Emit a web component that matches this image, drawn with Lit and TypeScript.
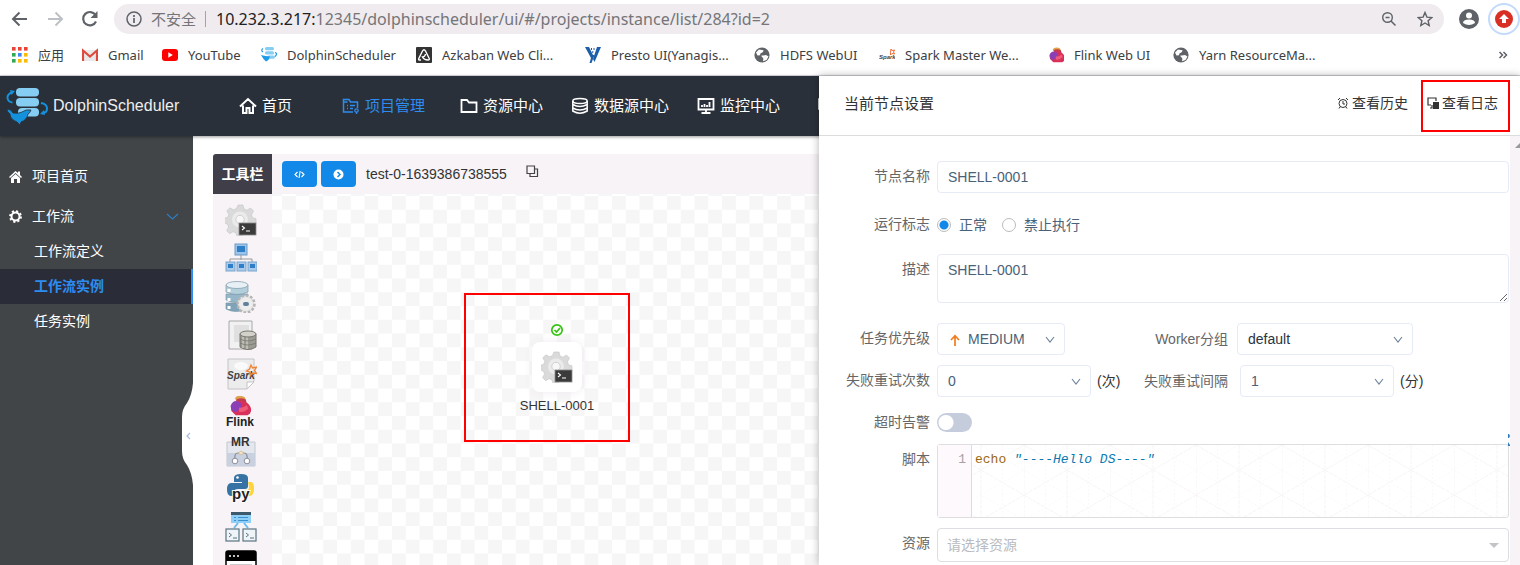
import { LitElement, html, svg, css } from "lit";
import { customElement, state } from "lit/decorators.js";
import { classMap } from "lit/directives/class-map.js";

const globe = svg`<circle cx="8" cy="8" r="7.6" fill="#5f6368"/><path d="M2 5.500 5 2.400 9.500 3.200 9 5 6.400 6.600 6 8.200 3.500 8.600zM7 8.800l5-.8 2.500 1.500L12.500 13 9 14.200 9.400 11.600z" fill="#fff"/>`;

const elephant = svg`<path d="M8 5q3-4.500 9-2.500q5 1 3 6l-7 3z" fill="#e0a24a"/><path d="M9 7q5-4 12-.5l1 5-7 2z" fill="#c33b4f"/><path d="M4 20q-2-9 6-11q10-3 15 4q4 5 1 10l-3 2H9z" fill="#d9305a"/><path d="M3 14q3-8 10-5q5 3 3 7l-6 5q-6 1-7-7z" fill="#8c3fb5"/><path d="M13 16q5 1 9-3l2 4q-5 5-11 4z" fill="#ef5a78"/>`;

const gear = svg`<g fill="#dadada" stroke="#c4c4c4" stroke-width=".6"><path d="M13 1h5l1 4 3 1.200 3.500-2.200 3 3-2 3.800 1 3 3.500 1v4.500l-4 1-1.200 3 2 3.600-3.200 3-3.600-2-3 1.200-1 3.500h-5l-1-3.700-3-1.200-3.400 2-3-3.200 2-3.500-1.200-3-3.400-1v-4.600l3.600-1 1.200-3-2-3.600 3.200-3 3.500 2 3-1.200z"/></g><circle cx="15" cy="15.500" r="8" fill="#ebebeb"/><circle cx="15" cy="15.500" r="4.200" fill="#f8f6f8" stroke="#c6c6c6" stroke-width=".8"/><rect x="14" y="19" width="17" height="12" fill="#3b3b3b" stroke="#8c8c8c" stroke-width=".8"/><path d="m17 22 2.500 2-2.500 2M21 27h4" fill="none" stroke="#fff" stroke-width="1.100"/>`;

const toolIcons = [
  gear,
  svg`<rect x="10" y="1" width="12" height="11" fill="#9cc4ea" stroke="#6f9bc4"/><rect x="12" y="3" width="8" height="6" fill="#2f7fc8"/><path d="M16 12v5M5 19v-3h22v3" fill="none" stroke="#999"/>${[1, 12, 23].map((x) => svg`<rect x=${x} y="19" width="9" height="9" fill="#a8cbed" stroke="#7aa3c9"/><rect x=${x + 2} y="21" width="5" height="4" fill="#2f7fc8"/>`)}`,
  svg`<g stroke="#7d98a8" stroke-width=".7"><path d="M1 22v6q10 5 21 0v-6z" fill="#7fa3b8"/><path d="M1 13v6q10 5 22 0v-6z" fill="#95b7c9"/><path d="M1 4v7q11 5 22 0V4z" fill="#b4cfdc"/><ellipse cx="12" cy="4" rx="11" ry="3.500" fill="#e6f0f5"/></g><path d="M4 8v3M4 17v3M4 25v3" stroke="#fff" stroke-width="3"/><circle cx="21" cy="23" r="8.500" fill="#e4e4e4" stroke="#b5b5b5" stroke-width="2.500" stroke-dasharray="2.600 1.800"/><circle cx="21" cy="23" r="6.500" fill="#ededed"/><rect x="18" y="21" width="6" height="4" rx="2" fill="#5f7f9b"/>`,
  svg`<path d="M4 2h23v28H4z" fill="#f1f1f1" stroke="#a8a8a8"/><path d="M9 6h15v17H9z" fill="#e0e0e0"/><path d="M15 15v13q8 5 16 0V15z" fill="#9b9b93" stroke="#77776f"/><path d="M18 17v12M22 18v12" stroke="#c9c9c0" stroke-width="1.500"/><ellipse cx="23" cy="15" rx="8" ry="3" fill="#d2d2ca" stroke="#77776f"/><path d="M15 20q8 4 16 0M15 24q8 4 16 0" fill="none" stroke="#77776f" stroke-width=".8"/>`,
  svg`<path d="M3 1h26v22l-7 8H3z" fill="#ececec" stroke="#c4c4c4"/><path d="M22 31v-7h7z" fill="#fff" stroke="#c4c4c4"/><ellipse cx="16" cy="8" rx="7" ry="4" fill="#fafafa"/><text x="2" y="21" class="glyph-spark">Spark</text><path d="m26 7 1.500 3 4-1-2 3.500 2 3-4-.5-2 2.500-1-3.500-3-1 3-2z" fill="none" stroke="#f08232" stroke-width="1.300"/>`,
  svg`<g transform="translate(3 -2) scale(.85)">${elephant}</g><text x="1" y="30" class="glyph-flink">Flink</text>`,
  svg`<path d="M2 7h28v24H2z" fill="#e4e8ee" stroke="#c2c8d1"/><path d="M2 18h28v13H2z" fill="#c9d1e0"/><path d="M10 25q-1-7 3-7h6q4 0 3 7" fill="none" stroke="#8a8f99" stroke-width="1.200"/><circle cx="10" cy="26" r="2.800" fill="#fff" stroke="#8a8f99"/><circle cx="22" cy="26" r="2.800" fill="#fff" stroke="#8a8f99"/><path d="m16 16 3 2-3 2-3-2z" fill="#f3e2c4" stroke="#c7ad80" stroke-width=".6"/><text x="6" y="11" class="glyph-mr">MR</text>`,
  svg`<path d="M16 1q-7 0-7 4v4h8v1H6q-4 0-4 6.500T6 23h3v-4q0-3 4-3h7q3 0 3-3V5q0-4-7-4z" fill="#3772a4"/><path d="M23 9h3q3 0 3 6.500T25 23h-9v-4l5-1q3-1 3-4z" fill="#ffd43b"/><circle cx="12.500" cy="4.500" r="1.300" fill="#fff"/><text x="7" y="26" class="glyph-py">py</text>`,
  svg`<path d="M6 1h20v3H6z" fill="#3c5a6b"/><path d="M6 4h20v8H6z" fill="#8fd0f8"/><path d="M9 6.500h2M13 6.500h10M9 9.500h2M13 9.500h10" stroke="#3d8fd0"/><path d="m13 12-4 5M19 12l4 5" stroke="#6bbcf0" stroke-width="2"/><g fill="#eef4f7" stroke="#5b7480" stroke-width="1.200"><rect x="1" y="18" width="13" height="12"/><rect x="18" y="18" width="13" height="12"/></g><path d="m4 22 2.500 2L4 26M8 27h4M21 22l2.500 2-2.500 2M25 27h4" fill="none" stroke="#5b7480"/>`,
  svg`<rect x="1" y="1" width="30" height="30" rx="2" fill="#fff" stroke="#000" stroke-width="1.500"/><path d="M1 1h30v10H1z" fill="#000"/><path d="M4 6h2M8 6h2M12 6h2" stroke="#fff" stroke-width="1.600"/><path d="M5 15h22" stroke="#999"/>`,
];

const bookmarks = [
  { name: "应用", icon: svg`${[0, 6, 12].map((y, r) => [0, 6, 12].map((x, c) => svg`<rect x=${x} y=${y} width="3.600" height="3.600" fill=${[["#ea4335", "#ea4335", "#ea4335"], ["#34a853", "#4285f4", "#fbbc05"], ["#34a853", "#fbbc05", "#fbbc05"]][r][c]}/>`))}` },
  { name: "Gmail", icon: svg`<path d="M0 3h16v11H0z" fill="#e9e9e9"/><path d="M1 14V3.500l7 6 7-6V14" fill="none" stroke="#dc4b3e" stroke-width="2.200"/>` },
  { name: "YouTube", icon: svg`<rect y="2" width="16" height="12" rx="3" fill="#f00"/><path d="m6.300 5.200 4.500 2.800-4.500 2.800z" fill="#fff"/>` },
  { name: "DolphinScheduler", icon: svg`<g fill="#86cdf4"><rect x="4" y="0" width="9" height="3.300" rx="1.600"/><rect x="4" y="4.200" width="9" height="3.300" rx="1.600"/><rect x="6" y="8.400" width="8" height="3.300" rx="1.600"/></g><path d="M2 1.500Q-.5 3 2 5M14 5.500q3 1 0 4" fill="none" stroke="#1e9be6" stroke-width="1.200"/><path d="M0 8q4 1 9 1.500-1 4-4 5Q2 12 0 8z" fill="#1e9be6"/>` },
  { name: "Azkaban Web Cli...", icon: svg`<rect width="16" height="16" rx="1" fill="#333"/><path d="M5 13H3.500Q2 13 3 11L6.500 4Q8 1.500 9.500 4L13 11q1 2-1 2-4 0-5.500-3Q9 10 9.500 7" fill="none" stroke="#fff" stroke-width="1.400"/>` },
  { name: "Presto UI(Yanagis...", icon: svg`<path d="M0 0h4l4 8 1.500 0L6.500 16H4.500L6 11z" fill="#1d5ea8"/><path d="M12 0h4L9.500 15 8 12z" fill="#1d5ea8"/><path d="M6 1h1v2H6zM8.500 1h1v2h-1zM7.300 4h1v2h-1z" fill="#1d5ea8"/>` },
  { name: "HDFS WebUI", icon: globe },
  { name: "Spark Master We...", icon: svg`<text x="0" y="12" class="glyph-tiny">Spark</text><path d="m12 2 1 1.500L15.500 3l-1 2 1 2-2.500-.5-1.500 1.500V5.500z" fill="none" stroke="#ee6a33"/>` },
  { name: "Flink Web UI", icon: svg`<g transform="translate(-.5 -.8) scale(.64)">${elephant}</g>` },
  { name: "Yarn ResourceMa...", icon: globe },
];

const navItems = [
  { name: "首页", icon: svg`<path d="M1 9.500 9 2l8 7.500M4 8.500V16h3.500v-5h3v5H14V8.500" fill="none" stroke="currentColor" stroke-width="2"/>` },
  { name: "项目管理", icon: svg`<path d="M11 15H1.500V2.500H7L8.500 5h7v6M1.500 5h4M5 8.500h1M8 8.500h5M5 11.500h1M8 11.500h3" fill="none" stroke="currentColor" stroke-width="1.500"/><circle cx="14.500" cy="13.500" r="1.700" fill="none" stroke="currentColor" stroke-width="1.300"/><path d="M14.500 15v2" stroke="currentColor" stroke-width="1.300"/>` },
  { name: "资源中心", icon: svg`<path d="M1.500 3H7l2 2.500h7.500V15h-15z" fill="none" stroke="currentColor" stroke-width="1.800"/>` },
  { name: "数据源中心", icon: svg`<ellipse cx="9" cy="4" rx="7.200" ry="2.500" fill="none" stroke="currentColor" stroke-width="1.500"/><path d="M1.800 4v10q7 4.500 14.400 0V4M1.800 7.500q7 4 14.400 0M1.800 11q7 4 14.400 0" fill="none" stroke="currentColor" stroke-width="1.500"/>` },
  { name: "监控中心", icon: svg`<path d="M1.500 2h15v10.500h-15zM9 12.500V16M4.500 16h9M5 10V8M7.500 10V7M10 10V8M12.500 10V5" fill="none" stroke="currentColor" stroke-width="1.800"/>` },
  { name: "", icon: svg`<path d="M2 2h14v10H2zM9 12v4" fill="none" stroke="currentColor" stroke-width="1.600"/>` },
];

const chevron = svg`<path d="m1 3 4 5 4-5" fill="none" stroke="currentColor" stroke-width="1.100"/>`;

@customElement("app-root")
export class AppRoot extends LitElement {
  static styles = css`
    :host {
      display: flex;
      flex-direction: column;
      height: 100vh;
      overflow: hidden;
      background: #fff;
      color: #333;
      font: 14px/20px "Liberation Sans", "Noto Sans CJK SC", sans-serif;
    }
    * { box-sizing: border-box; }
    svg { display: block; flex: none; }
    a { color: inherit; text-decoration: none; }
    button { border: 0; padding: 0; background: none; color: inherit; font: inherit; cursor: pointer; }
    ul { list-style: none; margin: 0; padding: 0; }

    .chrome { flex: none; font-family: "Noto Sans", "Noto Sans CJK SC", sans-serif; border-bottom: 1px solid #dcdae2; color: #3c4043; }
    .toolbar { display: flex; align-items: center; height: 38px; padding-left: 10px; }
    .toolbar > button { width: 20px; margin-right: 15px; display: grid; place-items: center; }
    .omnibox { flex: 1; display: flex; align-items: center; height: 30px; margin-left: -1px; padding: 0 11px 0 12px; border-radius: 15px; background: #efebef; font-size: 15px; color: #757578; white-space: nowrap; }
    .insecure { margin: 0 9px 0 9px; }
    .sep { width: 1px; height: 16px; margin-right: 10px; background: #a5a3a8; }
    .url { flex: 1; min-width: 0; overflow: hidden; outline: 0; font-size: 16px; }
    .url b { font-weight: 400; color: #202124; }
    .omnibox button { margin-left: 20px; }
    .toolbar .avatar { margin: 0 8px 0 14px; width: 22px; }
    .toolbar .update { width: 32px; margin: 0; }
    .bookmarks { display: grid; grid-template-columns: 70px 80px 99px 155px 169px 169px 125px 169px 125px 1fr auto; align-items: center; height: 37px; padding: 0 12px 3px; font-size: 13px; white-space: nowrap; }
    .bookmarks a { display: flex; align-items: center; gap: 10px; }

    .app { flex: 1; min-height: 0; position: relative; display: flex; flex-direction: column; }
    .header { flex: none; display: flex; align-items: center; height: 60px; padding-left: 5px; background: #2a3039; color: #fff; box-shadow: 0 1px 3px rgba(0, 0, 0, .4); z-index: 1; }
    .brand { display: flex; align-items: center; width: 234px; gap: 3px; font-size: 16px; color: #eee; }
    .nav { display: grid; grid-template-columns: 103px 118px 111px 126px 120px 100px; font-size: 15px; }
    .nav a { display: flex; align-items: center; gap: 5px; white-space: nowrap; }
    .nav .on { color: #2d8cf0; }
    .body { flex: 1; min-height: 0; display: flex; }

    .side { flex: none; position: relative; width: 193px; padding-top: 22px; background: #424548; color: #fff; }
    .side-item { display: flex; align-items: center; gap: 10px; height: 36px; margin-bottom: 4px; padding: 0 14px 0 9px; }
    .side-item:nth-of-type(2) { margin-bottom: 0; }
    .side-item .fold { margin-left: auto; color: #2a7fc4; }
    .sub a { display: block; height: 35px; padding-left: 34px; line-height: 35px; }
    .sub .on { background: #2a2c38; border-right: 2px solid #2d8cf0; color: #2d8cf0; font-weight: 700; }
    .handle { position: absolute; right: 0; top: 247px; }

    .main { flex: 1; min-width: 0; display: grid; grid-template: 40px 1fr / 59px 1fr; padding: 18px 20px 0; }
    .tools-title { background: #403e49; color: #fff; font-weight: 700; text-align: center; line-height: 40px; border-radius: 3px 0 0; }
    .actions { display: flex; align-items: center; padding-left: 10px; background: #f7f3f7; }
    .actions .run { width: 35px; height: 26px; margin-right: 4px; border-radius: 4px; background: #1289e8; color: #fff; display: grid; place-items: center; }
    .flow-name { margin: 0 19px 0 6px; }
    .copy { padding-bottom: 6px; }
    .tools { min-height: 0; overflow: hidden; background: #f7f3f7; }
    .tools ul { display: grid; grid-template-rows: repeat(10, 1fr); justify-items: center; align-items: center; height: 384px; margin-top: 7px; padding-right: 3px; }
    .canvas { position: relative; overflow: hidden; background: 10px 2px / 55px 55px url("data:image/svg+xml,%3Csvg xmlns='http://www.w3.org/2000/svg' viewBox='0 0 4 4'%3E%3Cpath d='M0 0h1v1H0zM2 0h1v1H2zM1 1h1v1H1zM3 1h1v1H3zM0 2h1v1H0zM2 2h1v1H2zM1 3h1v1H1zM3 3h1v1H3z' fill='%23f6f6f6'/%3E%3C/svg%3E"); }
    .mark { position: absolute; left: 192px; top: 99px; width: 166px; height: 149px; border: 2px solid #f00; }
    .node { position: absolute; left: 235px; top: 129px; width: 100px; display: flex; flex-direction: column; align-items: center; font-size: 13px; line-height: 18px; }
    .node-box { display: grid; place-items: center; width: 50px; height: 50px; margin: 5px 0; border-radius: 8px; background: #fff; box-shadow: 0 0 8px #f0e9f0; }

    .drawer { position: absolute; z-index: 2; top: 0; right: 0; bottom: 0; width: 701px; display: flex; flex-direction: column; background: #fff; box-shadow: 0 0 8px rgba(0, 0, 0, .3); }
    .drawer-head { flex: none; display: flex; align-items: center; height: 60px; padding: 0 10px 0 25px; border-bottom: 1px solid #dcdcdc; }
    .drawer-head h2 { flex: 1; margin: 0; padding-bottom: 3px; font-size: 15px; font-weight: 400; }
    .drawer-head button { display: flex; align-items: center; gap: 3px; height: 52px; padding-bottom: 5px; }
    .drawer-head .log { margin-left: 13px; padding-left: 4px; padding-right: 10px; border: 2px solid #f00; }
    .drawer-body { flex: 1; min-height: 0; display: flex; }
    .form { flex: 1; min-width: 0; overflow: hidden; display: flex; flex-direction: column; gap: 10px; padding: 25px 1px 0 0; }
    .bar { width: 10px; background: #f7f3f7; }
    .bar svg { margin: 7px 0 0 5px; }

    .row { flex: none; display: grid; grid-template-columns: 111px 1fr; column-gap: 7px; }
    .row > label, .row > .caption { text-align: right; line-height: 30px; color: #666; }
    .flags { height: 41px; align-items: center; }
    .timeout { height: 27px; align-items: center; }
    .desc { margin-bottom: 10px; }
    .line { display: flex; align-items: center; }
    .first { display: flex; align-items: center; gap: 6px; width: 206px; }
    .second { width: 85px; margin-right: 9px; text-align: right; white-space: nowrap; color: #666; }
    .retry .second { margin-right: 12px; }
    .unit { margin-left: 6px; }
    .first .unit { margin: 0; }

    input[type="text"], textarea, select { display: block; width: 100%; height: 32px; margin: 0; padding: 0 10px; border: 1px solid #e6ebf8; border-radius: 4px; background: #fff; color: #4a6278; font: inherit; outline: 0; appearance: none; }
    textarea { height: 49px; padding-top: 5px; resize: vertical; }
    .pick { position: relative; }
    .pick svg { position: absolute; right: 10px; top: 11px; color: #6a8299; pointer-events: none; }
    .pick .up { left: 12px; right: auto; }
    .priority { width: 128px; }
    .priority select { padding-left: 30px; }
    .worker { width: 176px; }
    .worker select { color: #2a3442; }
    .count { width: 154px; }
    .resource select { height: 34px; padding-left: 9px; border-color: #dcdee2; color: #b8bbc0; }
    .resource svg { top: 14px; }

    .radios { display: flex; gap: 15px; padding-top: 3px; color: #4a6278; }
    .radios label { display: flex; align-items: center; gap: 8px; }
    .radios input { appearance: none; width: 14px; height: 14px; margin: 0; border: 1px solid #bbb; border-radius: 50%; background: #fff; }
    .radios input:checked { background: radial-gradient(#1289e8 4px, #fff 5px); }
    .toggle { appearance: none; width: 35px; height: 19px; margin: 0; border-radius: 10px; background: radial-gradient(circle at 9px 50%, #fff 7px, transparent 8px) #c5cddd; }
    .toggle:checked { background: radial-gradient(circle at 26px 50%, #fff 7px, transparent 8px) #1289e8; }

    .editor { position: relative; display: flex; height: 74px; border: 1px solid #dedede; border-radius: 3px; font: 13px/20px "Liberation Mono", "Noto Sans CJK SC", monospace; }
    .gutter { width: 34px; padding: 5px 5px 0; border-right: 1px solid #ddd; background: #fdf9fd; color: #a5a0a5; text-align: right; }
    .code { flex: 1; padding: 5px 3px; outline: 0; white-space: pre; background: 52px 50px / 86px 50px url("data:image/svg+xml,%3Csvg xmlns='http://www.w3.org/2000/svg' viewBox='0 0 86 50'%3E%3Cpath d='M0 0v50M43 0v50M0 0 86 50M86 0 0 50' fill='none' stroke='%23f8f3f7' stroke-dasharray='4 1'/%3E%3Cpath d='M21.500 0v50M64.500 0v50M0 25 43 0 86 25 43 50z' fill='none' stroke='%23fbf8fb' stroke-dasharray='2 2'/%3E%3C/svg%3E"); }
    .cmd { color: #99690f; }
    .str { color: #0b79b0; font-style: italic; }
    .expand { position: absolute; right: -2px; top: -11px; }

    .glyph-spark { font: italic 700 10px "Liberation Sans", sans-serif; fill: #444; }
    .glyph-flink { font: 700 12px "Liberation Sans", sans-serif; fill: #222; }
    .glyph-mr { font: 700 12px "Liberation Sans", sans-serif; fill: #333; }
    .glyph-py { font: 700 15px "Liberation Sans", sans-serif; fill: #222; stroke: #fff; stroke-width: 2px; paint-order: stroke; }
    .glyph-tiny { font: italic 700 6px "Liberation Sans", sans-serif; fill: #444; }
  `;

  @state() private flag = "normal";

  private icon(body: unknown, size = 16, box = size, name = "") {
    return html`<svg class=${name} width=${size} height=${size} viewBox="0 0 ${box} ${box}" aria-hidden="true">${body}</svg>`;
  }

  private down() {
    return this.icon(chevron, 10);
  }

  private renderChrome() {
    return html`<div class="chrome">
      <div class="toolbar">
        <button aria-label="后退">${this.icon(svg`<path d="M17 10H3M9.500 3.500 3 10l6.500 6.500" fill="none" stroke="#5f6368" stroke-width="2"/>`, 20)}</button>
        <button aria-label="前进">${this.icon(svg`<path d="M3 10h14M10.500 3.500 17 10l-6.500 6.500" fill="none" stroke="#bdc1c6" stroke-width="2"/>`, 20)}</button>
        <button aria-label="刷新">${this.icon(svg`<path d="M16 12.500A6.700 6.700 0 1 1 15.500 6" fill="none" stroke="#5f6368" stroke-width="2.200"/><path d="M17.500 2v7h-7z" fill="#5f6368"/>`, 20)}</button>
        <div class="omnibox">
          ${this.icon(svg`<circle cx="8" cy="8" r="7" fill="none" stroke="#5f6368" stroke-width="1.500"/><path d="M8 7v5M8 4v2" stroke="#5f6368" stroke-width="1.700"/>`)}
          <span class="insecure">不安全</span><span class="sep"></span>
          <div class="url" role="textbox" aria-label="地址"><b>10.232.3.217:</b>12345/dolphinscheduler/ui/#/projects/instance/list/284?id=2</div>
          <button aria-label="缩放">${this.icon(svg`<circle cx="6.500" cy="6.500" r="4.800" fill="none" stroke="#5f6368" stroke-width="1.400"/><path d="m10 10 4.500 4.500M4.500 6.500h4" stroke="#5f6368" stroke-width="1.500"/>`)}</button>
          <button aria-label="收藏">${this.icon(svg`<path d="m8 1.500 1.900 4.600 4.900.4-3.700 3.200 1.100 4.800L8 12l-4.200 2.500 1.100-4.800L1.200 6.500l4.900-.4z" fill="none" stroke="#5f6368" stroke-width="1.400"/>`)}</button>
        </div>
        <button class="avatar" aria-label="用户">${this.icon(svg`<circle cx="11" cy="11" r="10" fill="#5f6368"/><circle cx="11" cy="7.500" r="3" fill="#fff"/><path d="M5 15q0-3.500 6-3.500t6 3.500q-6 4-12 0z" fill="#fff"/>`, 22)}</button>
        <button class="update" aria-label="更新">${this.icon(svg`<circle cx="16" cy="16" r="15" fill="#fff" stroke="#c3dafb" stroke-width="2"/><circle cx="16" cy="16" r="9" fill="#d93025"/><path d="m16 11 5 5h-3v4h-4v-4h-3z" fill="#fff"/>`, 32)}</button>
      </div>
      <nav class="bookmarks">
        ${bookmarks.map((b) => html`<a href="#">${this.icon(b.icon)}${b.name}</a>`)}
        <button aria-label="更多书签">${this.icon(svg`<path d="m1.500 2 3 3-3 3M5.500 2l3 3-3 3" fill="none" stroke="#5f6368" stroke-width="1.500"/>`, 10)}</button>
      </nav>
    </div>`;
  }

  private renderHeader() {
    return html`<header class="header">
      <a class="brand" href="#">
        <svg width="45" height="40" viewBox="0 0 45 40" aria-hidden="true">
          <g fill="#86cdf4"><rect x="11" y="2" width="23" height="8.500" rx="4"/><rect x="11" y="12" width="23" height="8.500" rx="4"/><rect x="13" y="22" width="21" height="8.500" rx="4"/></g>
          <g fill="none" stroke="#1491dc" stroke-width="2"><path d="M8 6Q2 8 2.500 12t5 4.500"/><path d="M36 17q6 1 6 5.500T37 27"/></g>
          <path d="m5 4 5 1-3.500 4zM39 24l-4 4 5 1z" fill="#1491dc"/>
          <path d="M2 23q4 0 6 4 5 1 9-1 4-3 9-2-1 3-3 4-1 6-7 8l-1 3-3-3Q5 33 5 28q-3-2-3-5z" fill="#1491dc" stroke="#2a3039" stroke-width=".8"/>
        </svg>DolphinScheduler</a>
      <nav class="nav">
        ${navItems.map((n, i) => html`<a href="#" class=${classMap({ on: i === 1 })}>${this.icon(n.icon, 18)}${n.name}</a>`)}
      </nav>
    </header>`;
  }

  private renderSide() {
    return html`<aside class="side">
      <a class="side-item" href="#">${this.icon(svg`<path d="M0 7 6.500 1 9 3V1.500h2V5l2 2-1 1-5.500-5L1 8zM2 8l4.500-4L11 8v5H8V9H5v4H2z" fill="#fff"/>`, 13)}项目首页</a>
      <a class="side-item" href="#">${this.icon(svg`<circle cx="6.500" cy="6.500" r="4" fill="none" stroke="#fff" stroke-width="2"/><circle cx="6.500" cy="6.500" r="5.500" fill="none" stroke="#fff" stroke-width="1.800" stroke-dasharray="2.200 2.100"/>`, 13)}工作流
        ${this.icon(svg`<path d="m1 4 5.500 5L12 4" fill="none" stroke="currentColor" stroke-width="1.200"/>`, 13, 13, "fold")}</a>
      <nav class="sub">
        <a href="#">工作流定义</a><a href="#" class="on">工作流实例</a><a href="#">任务实例</a>
      </nav>
      <svg class="handle" width="11" height="102" viewBox="0 0 11 102" aria-hidden="true"><path d="M11 0q-1 12-6 20-5 6-5 14v34q0 8 5 14 5 8 6 20z" fill="#fff"/><path d="m8 50-3 3 3 3" fill="none" stroke="#a9bce0" stroke-width="1.300"/></svg>
    </aside>`;
  }

  private renderMain() {
    return html`<main class="main">
      <div class="tools-title">工具栏</div>
      <div class="actions">
        <button class="run" aria-label="查看变量">${this.icon(svg`<path d="M3.500 3 1 5.500 3.500 8M7.500 3 10 5.500 7.500 8M6.200 2 5 9" fill="none" stroke="#fff" stroke-width="1.100"/>`, 11)}</button>
        <button class="run" aria-label="启动参数">${this.icon(svg`<circle cx="5.500" cy="5.500" r="5" fill="#fff"/><path d="m4.500 3 2.500 2.500L4.500 8" fill="none" stroke="#1289e8" stroke-width="1.500"/>`, 11)}</button>
        <span class="flow-name">test-0-1639386738555</span>
        <button class="copy" aria-label="复制名称">${this.icon(svg`<path d="M1 1h7.500v7.500H1zM4 8.500v3h7.500V4h-3" fill="none" stroke="#444" stroke-width="1.200"/>`, 13)}</button>
      </div>
      <div class="tools"><ul>${toolIcons.map((t) => html`<li>${this.icon(t, 32)}</li>`)}</ul></div>
      <div class="canvas">
        <div class="node">
          ${this.icon(svg`<circle cx="7" cy="7" r="5.200" fill="#fff" stroke="#33c30f" stroke-width="1.700"/><path d="m4.500 7 2 2L10 5" fill="none" stroke="#33c30f" stroke-width="1.700"/>`, 14)}
          <span class="node-box">${this.icon(gear, 32)}</span>SHELL-0001
        </div>
        <div class="mark"></div>
      </div>
    </main>`;
  }

  private renderDrawer() {
    return html`<section class="drawer">
      <div class="drawer-head">
        <h2>当前节点设置</h2>
        <button>${this.icon(svg`<circle cx="6" cy="6.500" r="4" fill="none" stroke="#333"/><path d="M6 4v3h2M1 3l2-2M11 3 9 1M3 10l-1 1.500M9 10l1 1.500" fill="none" stroke="#333"/>`, 12)}查看历史</button>
        <button class="log">${this.icon(svg`<path d="M4 8H1V1h8v3M3 11h2V8" fill="none" stroke="#333" stroke-width="1.200"/><path d="M6 5h6v7H6z" fill="#333"/>`, 12)}查看日志</button>
      </div>
      <div class="drawer-body">
        <form class="form">
          <div class="row"><label for="name">节点名称</label><input id="name" type="text" .value=${"SHELL-0001"} /></div>
          <div class="row flags"><span class="caption">运行标志</span>
            <div class="radios">
              ${[["normal", "正常"], ["forbidden", "禁止执行"]].map(([v, t]) => html`<label><input type="radio" name="flag" .checked=${this.flag === v} @change=${() => (this.flag = v)} />${t}</label>`)}
            </div></div>
          <div class="row desc"><label for="desc">描述</label><textarea id="desc" .value=${"SHELL-0001"}></textarea></div>
          <div class="row"><label for="priority">任务优先级</label>
            <div class="line">
              <div class="first"><div class="pick priority"><select id="priority"><option>MEDIUM</option></select>
                ${this.icon(svg`<path d="M6 12V1.500M2 6l4-4.300L10 6" fill="none" stroke="#f07d1e" stroke-width="1.700"/>`, 12, 12, "up")}${this.down()}</div></div>
              <label class="second" for="worker">Worker分组</label>
              <div class="pick worker"><select id="worker"><option>default</option></select>${this.down()}</div>
            </div></div>
          <div class="row"><label for="times">失败重试次数</label>
            <div class="line retry">
              <div class="first"><div class="pick count"><select id="times"><option>0</option></select>${this.down()}</div><span class="unit">(次)</span></div>
              <label class="second" for="interval">失败重试间隔</label>
              <div class="pick count"><select id="interval"><option>1</option></select>${this.down()}</div><span class="unit">(分)</span>
            </div></div>
          <div class="row timeout"><label for="timeout">超时告警</label><input class="toggle" id="timeout" type="checkbox" role="switch" /></div>
          <div class="row"><span class="caption" id="script-label">脚本</span>
            <div class="editor">
              <div class="gutter">1</div>
              <div class="code" role="textbox" aria-labelledby="script-label"><span class="cmd">echo</span> <span class="str">"----Hello DS----"</span></div>
              <svg class="expand" width="2" height="13" viewBox="0 0 2 13" aria-hidden="true"><path d="M0 0h1l1 2-1 2H0zM0 8l2 3v1H0z" fill="#2d7cc0"/></svg>
            </div></div>
          <div class="row"><label for="resource">资源</label>
            <div class="pick resource"><select id="resource"><option>请选择资源</option></select>${this.icon(svg`<path d="M0 1h10L5 6z" fill="#c4c4c8"/>`, 10)}</div></div>
        </form>
        <div class="bar"><svg width="5" height="5" viewBox="0 0 5 5" aria-hidden="true"><path d="M0 5 5 0v5z" fill="#999"/></svg></div>
      </div>
    </section>`;
  }

  render() {
    return html`${this.renderChrome()}
      <div class="app">
        ${this.renderHeader()}
        <div class="body">${this.renderSide()}${this.renderMain()}</div>
        ${this.renderDrawer()}
      </div>`;
  }
}
